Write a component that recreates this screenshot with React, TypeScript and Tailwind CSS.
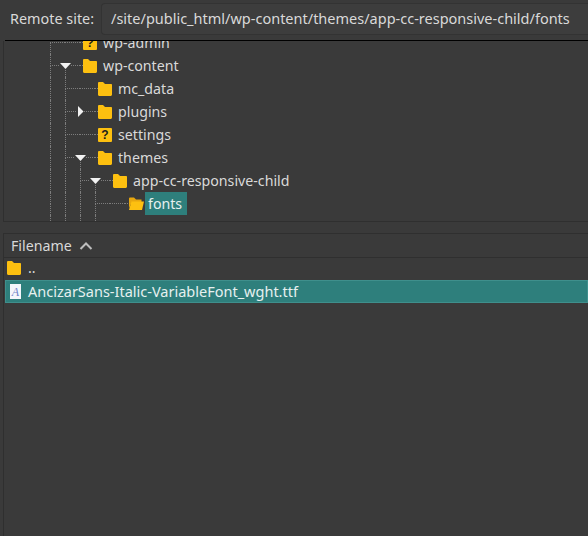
import React from "react";

type Kind = "v" | "b" | "o" | "h";

function Cell({ kind, w = 15, arrow }: { kind: Kind; w?: number; arrow?: "down" | "right" }) {
  const top =
    kind === "v"
      ? "border-l border-dotted border-[#7d7d7d]"
      : kind === "b"
        ? "border-l border-b border-dotted border-[#7d7d7d]"
        : "border-b border-dotted border-[#7d7d7d]";
  const bottom = kind === "v" || kind === "b" || kind === "o" ? "border-l border-dotted border-[#7d7d7d]" : "";
  return (
    <div className="relative flex h-full shrink-0 flex-col" style={{ width: w }}>
      <div className={`h-1/2 ${top}`} />
      <div className={`h-1/2 ${bottom}`} />
      {arrow === "down" && (
        <div className="absolute left-[-5px] top-[9px] flex h-[6px] w-[11px] bg-[#3a3a3a]">
          <svg width="11" height="6" viewBox="0 0 11 6">
            <path d="M0 0H11L5.5 6Z" fill="#f2f2f2" />
          </svg>
        </div>
      )}
      {arrow === "right" && (
        <div className="absolute left-[-3px] top-[6px] flex h-[11px] w-[7px] bg-[#3a3a3a]">
          <svg width="7" height="11" viewBox="0 0 7 11">
            <path d="M1 0V11L6.5 5.5Z" fill="#f2f2f2" />
          </svg>
        </div>
      )}
    </div>
  );
}

function Folder({ open = false }: { open?: boolean }) {
  return open ? (
    <svg width="16" height="14" viewBox="0 0 16 14" className="shrink-0">
      <path d="M1 1.5C1 1 1.4.6 2 .6H6L8 2.4H13.5V5H4L1 11Z" fill="#e8a70e" />
      <path d="M3.4 4.6H16L14 13H1Z" fill="#fdc010" />
    </svg>
  ) : (
    <svg width="14" height="14" viewBox="0 0 14 14" className="shrink-0">
      <path d="M0 1.2C0 .6.5 0 1.2 0H5L7 2H13C13.6 2 14 2.4 14 3V12.6C14 13.4 13.5 14 12.8 14H1.2C.5 14 0 13.4 0 12.6Z" fill="#fdc010" />
    </svg>
  );
}

function Unknown() {
  return (
    <div className="flex h-[14px] w-[14px] shrink-0 items-center justify-center rounded-[1px] bg-[#fdc010] font-['Liberation_Sans',sans-serif] text-[12px] font-bold leading-none text-[#1c1c1c]">
      ?
    </div>
  );
}

function TreeRow({
  cells,
  icon,
  label,
  selected,
}: {
  cells: React.ReactNode;
  icon: React.ReactNode;
  label: string;
  selected?: boolean;
}) {
  return (
    <div className="flex h-[23px] shrink-0 items-stretch">
      <div className="flex h-full">{cells}</div>
      <div className="flex items-center">{icon}</div>
      {selected ? (
        <div className="ml-[1px] flex w-[42px] items-center bg-[#2e7f7c] pl-[3px] text-[#e6f0ef]">{label}</div>
      ) : (
        <div className="ml-[6px] flex items-center">{label}</div>
      )}
    </div>
  );
}

export default function App() {
  return (
    <div className="flex h-[536px] w-[588px] flex-col overflow-hidden bg-[#3a3a3a] font-['Noto_Sans',sans-serif] text-[14.2px] text-[#d9d9d9]">
      <div className="flex h-[40px] shrink-0 items-start">
        <div className="flex h-[35px] w-[101px] shrink-0 items-center pl-[10px] pt-[2px] text-[14.4px]">Remote site:</div>
        <div className="mt-[3px] flex h-[32px] flex-1 items-center rounded-l-[4px] border border-r-0 border-[#333333] bg-[#3d3d3d] pl-[9px] text-[14.5px] whitespace-nowrap">
          /site/public_html/wp-content/themes/app-cc-responsive-child/fonts
        </div>
      </div>
      <div className="ml-[5px] h-[1px] shrink-0 bg-black" />
      <div className="ml-[3px] flex h-[181px] shrink-0 flex-col overflow-hidden border-b border-l border-[#2f2f2f] pl-[46px]">
        <div className="-mt-[10px]">
          <TreeRow
            cells={<><Cell kind="b" /><Cell kind="h" /><Cell kind="h" w={3} /></>}
            icon={<Unknown />}
            label="wp-admin"
          />
          <TreeRow
            cells={<><Cell kind="b" /><Cell kind="o" arrow="down" /><Cell kind="h" w={3} /></>}
            icon={<Folder />}
            label="wp-content"
          />
          <TreeRow
            cells={<><Cell kind="v" /><Cell kind="b" /><Cell kind="h" /><Cell kind="h" w={3} /></>}
            icon={<Folder />}
            label="mc_data"
          />
          <TreeRow
            cells={<><Cell kind="v" /><Cell kind="b" /><Cell kind="h" arrow="right" /><Cell kind="h" w={3} /></>}
            icon={<Folder />}
            label="plugins"
          />
          <TreeRow
            cells={<><Cell kind="v" /><Cell kind="b" /><Cell kind="h" /><Cell kind="h" w={3} /></>}
            icon={<Unknown />}
            label="settings"
          />
          <TreeRow
            cells={<><Cell kind="v" /><Cell kind="b" /><Cell kind="o" arrow="down" /><Cell kind="h" w={3} /></>}
            icon={<Folder />}
            label="themes"
          />
          <TreeRow
            cells={<><Cell kind="v" /><Cell kind="v" /><Cell kind="b" /><Cell kind="o" arrow="down" /><Cell kind="h" w={3} /></>}
            icon={<Folder />}
            label="app-cc-responsive-child"
          />
          <TreeRow
            cells={<><Cell kind="v" /><Cell kind="v" /><Cell kind="v" /><Cell kind="b" /><Cell kind="h" /><Cell kind="h" w={3} /></>}
            icon={<Folder open />}
            label="fonts"
            selected
          />
          <div className="flex h-[23px]">
            <Cell kind="v" />
            <Cell kind="v" />
            <Cell kind="v" />
            <Cell kind="v" />
          </div>
        </div>
      </div>
      <div className="h-[11px] shrink-0" />
      <div className="ml-[3px] flex min-h-0 flex-1 flex-col border-l border-t border-[#2f2f2f]">
        <div className="flex h-[24px] shrink-0 items-center gap-[7px] border-b border-[#2f2f2f] pl-[7px]">
          <span>Filename</span>
          <svg width="14" height="8" viewBox="0 0 14 8" fill="none">
            <path d="M1.5 7L7 1.5L12.5 7" stroke="#bdbdbd" strokeWidth="2" />
          </svg>
        </div>
        <div className="flex h-[22px] shrink-0 items-center pb-[2px] pl-[3px]">
          <Folder />
          <span className="ml-[7px]">..</span>
        </div>
        <div className="ml-[1px] flex h-[23px] shrink-0 items-center border border-[#3f8f8c] bg-[#2e7f7c] pl-[4px] text-[14.5px] text-[#e6f0ef]">
          <div className="flex h-[15px] w-[11px] shrink-0 items-center justify-center bg-[#f4f6fb] font-['Liberation_Serif',serif] text-[12px] italic leading-none text-[#6f82c8]">
            A
          </div>
          <span className="ml-[7px] whitespace-nowrap">AncizarSans-Italic-VariableFont_wght.ttf</span>
        </div>
      </div>
    </div>
  );
}
